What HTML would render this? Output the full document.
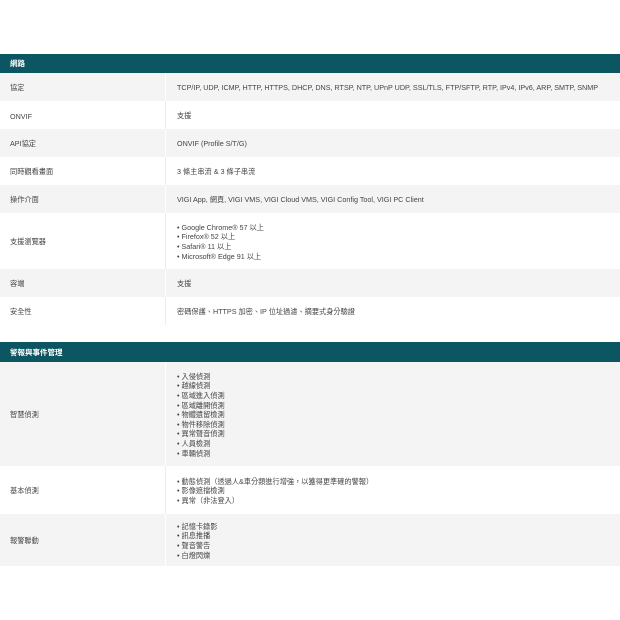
<!DOCTYPE html>
<html><head><meta charset="utf-8"><style>
body{margin:0;width:620px;height:620px;background:#fff;font-family:"Liberation Sans","Noto Sans CJK TC",sans-serif;font-size:7.2px;color:#444;position:relative;overflow:hidden}
.h{position:absolute;left:0;width:620px;background:#0b5661;color:#fff;font-weight:bold;box-sizing:border-box;padding-left:10px;display:flex;align-items:center;font-size:7.5px}
.r{position:absolute;left:0;width:620px;display:flex;align-items:center;box-sizing:border-box}
.r.g{background:#f4f4f4}
.l{position:absolute;left:10px;margin-top:2px}
.v{position:absolute;left:177px;line-height:9.6px;margin-top:2px}
.d{position:absolute;left:165px;top:0;bottom:0;width:1px;background:#ececec}
.g .d{background:#fff}
</style></head><body>
<div class="h" style="top:54px;height:19px">網路</div>
<div class="r g" style="top:73px;height:28px"><span class="d"></span><span class="l">協定</span><span class="v">TCP/IP, UDP, ICMP, HTTP, HTTPS, DHCP, DNS, RTSP, NTP, UPnP UDP, SSL/TLS, FTP/SFTP, RTP, IPv4, IPv6, ARP, SMTP, SNMP</span></div>
<div class="r" style="top:101px;height:28px"><span class="d"></span><span class="l">ONVIF</span><span class="v">支援</span></div>
<div class="r g" style="top:129px;height:28px"><span class="d"></span><span class="l">API協定</span><span class="v">ONVIF (Profile S/T/G)</span></div>
<div class="r" style="top:157px;height:28px"><span class="d"></span><span class="l">同時觀看畫面</span><span class="v">3 條主串流 &amp; 3 條子串流</span></div>
<div class="r g" style="top:185px;height:28px"><span class="d"></span><span class="l">操作介面</span><span class="v">VIGI App, 網頁, VIGI VMS, VIGI Cloud VMS, VIGI Config Tool, VIGI PC Client</span></div>
<div class="r" style="top:213px;height:56px"><span class="d"></span><span class="l">支援瀏覽器</span><span class="v">• Google Chrome® 57 以上<br>• Firefox® 52 以上<br>• Safari® 11 以上<br>• Microsoft® Edge 91 以上</span></div>
<div class="r g" style="top:269px;height:28px"><span class="d"></span><span class="l">容端</span><span class="v">支援</span></div>
<div class="r" style="top:297px;height:28px"><span class="d"></span><span class="l">安全性</span><span class="v">密碼保護、HTTPS 加密、IP 位址過濾、摘要式身分驗證</span></div>
<div class="h" style="top:342px;height:20px">警報與事件管理</div>
<div class="r g" style="top:362px;height:104px"><span class="d"></span><span class="l">智慧偵測</span><span class="v">• 入侵偵測<br>• 越線偵測<br>• 區域進入偵測<br>• 區域離開偵測<br>• 物體遺留檢測<br>• 物件移除偵測<br>• 異常聲音偵測<br>• 人員檢測<br>• 車輛偵測</span></div>
<div class="r" style="top:466px;height:48px"><span class="d"></span><span class="l">基本偵測</span><span class="v">• 動態偵測（透過人&amp;車分類進行增強，以獲得更準確的警報）<br>• 影像遮擋檢測<br>• 異常（非法登入）</span></div>
<div class="r g" style="top:514px;height:52px"><span class="d"></span><span class="l">報警聯動</span><span class="v">• 記憶卡錄影<br>• 訊息推播<br>• 聲音警告<br>• 白燈閃爍</span></div>
</body></html>
